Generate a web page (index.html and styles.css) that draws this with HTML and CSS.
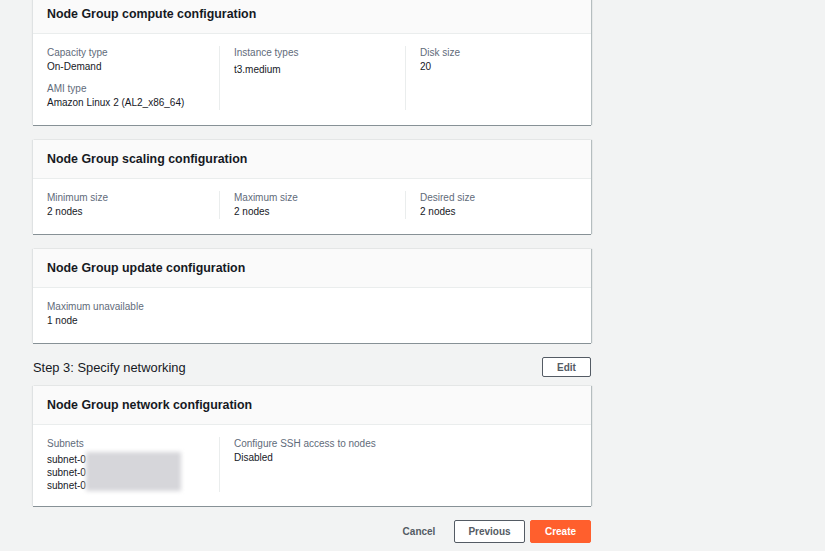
FILE: index.html
```html
<!DOCTYPE html>
<html>
<head>
<meta charset="utf-8">
<link rel="stylesheet" href="styles.css">
</head>
<body>
<main class="page">
  <section class="card first">
    <header class="card-header"><h2>Node Group compute configuration</h2></header>
    <div class="card-body cols">
      <div class="col">
        <div class="kv"><div class="label">Capacity type</div><div class="value">On-Demand</div></div>
        <div class="kv"><div class="label">AMI type</div><div class="value">Amazon Linux 2 (AL2_x86_64)</div></div>
      </div>
      <div class="col sep">
        <div class="kv"><div class="label">Instance types</div><div class="value shifted">t3.medium</div></div>
      </div>
      <div class="col sep">
        <div class="kv"><div class="label">Disk size</div><div class="value">20</div></div>
      </div>
    </div>
  </section>

  <section class="card">
    <header class="card-header"><h2>Node Group scaling configuration</h2></header>
    <div class="card-body cols">
      <div class="col"><div class="kv"><div class="label">Minimum size</div><div class="value">2 nodes</div></div></div>
      <div class="col sep"><div class="kv"><div class="label">Maximum size</div><div class="value">2 nodes</div></div></div>
      <div class="col sep"><div class="kv"><div class="label">Desired size</div><div class="value">2 nodes</div></div></div>
    </div>
  </section>

  <section class="card">
    <header class="card-header"><h2>Node Group update configuration</h2></header>
    <div class="card-body">
      <div class="kv"><div class="label">Maximum unavailable</div><div class="value">1 node</div></div>
    </div>
  </section>

  <div class="step-row">
    <h3 class="step-title">Step 3: Specify networking</h3>
    <button class="btn btn-small">Edit</button>
  </div>

  <section class="card">
    <header class="card-header"><h2>Node Group network configuration</h2></header>
    <div class="card-body cols tight">
      <div class="col">
        <div class="kv">
          <div class="label">Subnets</div>
          <div class="subnets">
            <div class="value">subnet-0</div>
            <div class="value">subnet-0</div>
            <div class="value">subnet-0</div>
            <div class="blur"></div>
          </div>
        </div>
      </div>
      <div class="col sep">
        <div class="kv"><div class="label">Configure SSH access to nodes</div><div class="value">Disabled</div></div>
      </div>
      <div class="col"></div>
    </div>
  </section>

  <div class="actions">
    <button class="btn btn-link">Cancel</button>
    <button class="btn btn-normal">Previous</button>
    <button class="btn btn-primary">Create</button>
  </div>
</main>
</body>
</html>
```
FILE: styles.css
```css
* { box-sizing: border-box; }
html, body { margin: 0; padding: 0; }
body {
  background: #f2f3f3;
  font-family: "Liberation Sans", Arial, sans-serif;
  color: #16191f;
  width: 825px;
  height: 551px;
  overflow: hidden;
}
.page {
  width: 558px;
  margin-left: 33px;
  margin-top: -5px;
  display: flex;
  flex-direction: column;
}
.card {
  background: #fff;
  box-shadow: 0 1px 0 0 #879196, 1px 0 1px 0 rgba(0,28,36,.25), -1px 0 1px 0 rgba(0,28,36,.08);
  margin-bottom: 15px;
}
.card-header {
  background: #fafafa;
  height: 39px;
  border-bottom: 1px solid #eaeded;
  display: flex;
  align-items: center;
  padding: 0 14px;
}
.card-header h2 {
  margin: 0;
  font-size: 12.4px;
  font-weight: 700;
  color: #16191f;
}
.card-body {
  padding: 12px 14px 15px 14px;
}
.card-body.tight { padding-bottom: 14px; }
.cols {
  display: grid;
  grid-template-columns: 172px 186px 1fr;
}
.col.sep {
  border-left: 1px solid #eaeded;
  padding-left: 14px;
}
.col {
  display: flex;
  flex-direction: column;
  gap: 8px;
}
.kv { display: flex; flex-direction: column; }
.label {
  font-size: 10px;
  line-height: 14px;
  color: #5f6b7a;
}
.value {
  font-size: 10px;
  line-height: 14px;
  color: #16191f;
}
.value.shifted { margin-top: 3px; }
.subnets {
  position: relative;
  margin-top: 2px;
}
.subnets .value {
  line-height: 13px;
}
.blur {
  position: absolute;
  left: 39px;
  top: -1px;
  width: 95px;
  height: 39px;
  background: #d6d6da;
  filter: blur(2px);
}
.step-row {
  display: flex;
  align-items: center;
  justify-content: space-between;
  margin-top: -1px;
  margin-bottom: 9px;
}
.step-title {
  margin: 0;
  font-size: 12.9px;
  font-weight: 400;
  color: #16191f;
}
.btn {
  font-family: "Liberation Sans", Arial, sans-serif;
  font-weight: 700;
  font-size: 10px;
  border-radius: 2px;
  cursor: pointer;
}
.btn-small {
  width: 49px;
  height: 20px;
  background: #fff;
  border: 1px solid #545b64;
  color: #545b64;
  padding: 0;
}
.actions {
  display: flex;
  justify-content: flex-end;
  align-items: center;
  gap: 5px;
  margin-top: -1px;
}
.btn-link {
  background: none;
  border: none;
  color: #545b64;
  padding: 0;
  width: 40px;
  height: 23px;
  margin-right: 10px;
  text-align: center;
}
.btn-normal {
  width: 71px;
  height: 23px;
  background: #fff;
  border: 1px solid #545b64;
  color: #545b64;
  padding: 0;
}
.btn-primary {
  width: 61px;
  height: 23px;
  background: #ff5f2d;
  border: 1px solid #ff5f2d;
  color: #fff;
  padding: 0;
}
```
